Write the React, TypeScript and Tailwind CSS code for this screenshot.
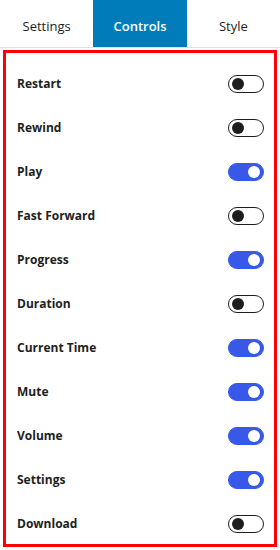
import { useState } from 'react';

const CONTROLS = [
  { key: 'restart', label: 'Restart', on: false },
  { key: 'rewind', label: 'Rewind', on: false },
  { key: 'play', label: 'Play', on: true },
  { key: 'fastForward', label: 'Fast Forward', on: false },
  { key: 'progress', label: 'Progress', on: true },
  { key: 'duration', label: 'Duration', on: false },
  { key: 'currentTime', label: 'Current Time', on: true },
  { key: 'mute', label: 'Mute', on: true },
  { key: 'volume', label: 'Volume', on: true },
  { key: 'settings', label: 'Settings', on: true },
  { key: 'download', label: 'Download', on: false },
];

const TABS = ['Settings', 'Controls', 'Style'];

function Toggle({ checked, onChange }: { checked: boolean; onChange: () => void }) {
  return (
    <button
      type="button"
      onClick={onChange}
      className={
        checked
          ? 'relative w-[36px] h-[18px] rounded-full bg-[#3858e9] border border-[#3858e9]'
          : 'relative w-[36px] h-[18px] rounded-full bg-white border border-[#1e1e1e]'
      }
    >
      <span
        className={
          checked
            ? 'absolute top-[2px] left-[19px] w-[12px] h-[12px] rounded-full bg-white'
            : 'absolute top-[2px] left-[3px] w-[12px] h-[12px] rounded-full bg-[#1e1e1e]'
        }
      />
    </button>
  );
}

export default function App() {
  const [tab, setTab] = useState('Controls');
  const [values, setValues] = useState<Record<string, boolean>>(
    Object.fromEntries(CONTROLS.map(c => [c.key, c.on]))
  );

  return (
    <div className="w-[280px] h-[550px] bg-white text-[#1e1e1e] font-['Open_Sans',sans-serif]">
      {/* Tabs */}
      <div className="flex h-[48px] border-b border-[#e0e0e0]">
        {TABS.map(t => (
          <button
            key={t}
            type="button"
            onClick={() => setTab(t)}
            className={
              t === tab
                ? 'flex-1 h-[47px] pt-[6px] bg-[#007cba] text-white text-[13px] font-semibold'
                : 'flex-1 h-[47px] pt-[6px] text-[#1e1e1e] text-[13px]'
            }
          >
            {t}
          </button>
        ))}
      </div>

      {/* Controls list */}
      <div className="mx-[3px] mt-[2px] h-[497px] border-[3px] border-[#ff0000] pt-[9px] pl-[11px] pr-[10px]">
        {CONTROLS.map(c => (
          <div key={c.key} className="flex items-center justify-between h-[44px]">
            <span className="text-[12px] font-bold">{c.label}</span>
            <Toggle
              checked={values[c.key]}
              onChange={() => setValues({ ...values, [c.key]: !values[c.key] })}
            />
          </div>
        ))}
      </div>
    </div>
  );
}
